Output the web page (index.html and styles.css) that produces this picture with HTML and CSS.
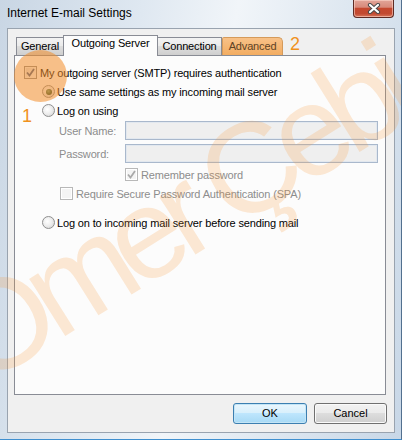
FILE: index.html
```html
<!DOCTYPE html>
<html lang="en">
<head>
<meta charset="utf-8">
<title>Internet E-mail Settings</title>
<link rel="stylesheet" href="styles.css">
</head>
<body>
<div class="window">
  <div class="titlebar">
    <span class="title">Internet E-mail Settings</span>
    <div class="close">
      <svg width="14" height="11" viewBox="0 0 14 11">
        <path d="M3 2 L11 9 M11 2 L3 9" stroke="#4a4a4a" stroke-width="4.2" stroke-linecap="round" fill="none"/>
        <path d="M3 2 L11 9 M11 2 L3 9" stroke="#ffffff" stroke-width="2.2" stroke-linecap="round" fill="none"/>
      </svg>
    </div>
  </div>
  <div class="client">
    <div class="tabs">
      <div class="tab t-general">General</div>
      <div class="tab selected t-out">Outgoing Server</div>
      <div class="tab t-conn">Connection</div>
      <div class="tab t-adv">Advanced</div>
    </div>
    <div class="panel">
      <div class="row r1">
        <span class="cb">
          <svg width="9" height="9" viewBox="0 0 9 9"><path d="M1 4.5 L3.5 7.5 L8 1" stroke="#4b5f87" stroke-width="1.8" fill="none"/></svg>
        </span>
        <span class="lab">My outgoing server (SMTP) requires authentication</span>
      </div>
      <div class="row ind r2">
        <span class="rb on"><span class="dot"></span></span>
        <span class="lab">Use same settings as my incoming mail server</span>
      </div>
      <div class="row ind r3">
        <span class="rb"></span>
        <span class="lab">Log on using</span>
      </div>
      <div class="row field r4">
        <span class="flbl">User Name:</span>
        <span class="input"></span>
      </div>
      <div class="row field r5">
        <span class="flbl">Password:</span>
        <span class="input"></span>
      </div>
      <div class="row r6">
        <span class="cb dis">
          <svg width="9" height="9" viewBox="0 0 9 9"><path d="M1 4.5 L3.5 7.5 L8 1" stroke="#a9a9a9" stroke-width="1.8" fill="none"/></svg>
        </span>
        <span class="lab dis-t">Remember password</span>
      </div>
      <div class="row r7">
        <span class="cb dis"></span>
        <span class="lab dis-t">Require Secure Password Authentication (SPA)</span>
      </div>
      <div class="row ind r8">
        <span class="rb"></span>
        <span class="lab">Log on to incoming mail server before sending mail</span>
      </div>
    </div>
    <div class="buttons">
      <button class="btn btn-ok">OK</button>
      <button class="btn btn-cancel">Cancel</button>
    </div>
  </div>
  <div class="watermark">Ömer Çebi</div>
  <div class="hl-circle"></div>
  <div class="num n1">1</div>
  <div class="num n2">2</div>
</div>
</body>
</html>
```
FILE: styles.css
```css
* { box-sizing: border-box; }
html, body { margin: 0; padding: 0; }
body {
  width: 402px;
  height: 440px;
  overflow: hidden;
  font-family: "Liberation Sans", Arial, sans-serif;
  font-size: 11px;
  letter-spacing: -0.15px;
  color: #000;
}
.window {
  position: relative;
  width: 402px;
  height: 440px;
  overflow: hidden;
  background: linear-gradient(100deg, #c9d6e4 0%, #dfe8f1 30%, #f1f5f9 50%, #dfe8f1 72%, #c8d7e7 100%);
  border-right: 1px solid #52708f;
  border-bottom: 1px solid #3f8fcf;
}
.titlebar {
  height: 28px;
  display: flex;
  justify-content: space-between;
  align-items: flex-start;
}
.title {
  margin: 6px 0 0 7px;
  font-size: 12px;
  line-height: 14px;
  letter-spacing: 0;
  color: #000;
}
.close {
  width: 41px;
  height: 18px;
  margin-right: 7px;
  border: 1px solid #5e2b24;
  border-top: none;
  border-radius: 0 0 4px 4px;
  background: linear-gradient(#e2a599 0%, #d88a7b 42%, #c5482f 50%, #c24a31 80%, #d8765c 100%);
  box-shadow: inset 0 0 0 1px rgba(255, 220, 210, 0.55);
  display: flex;
  align-items: center;
  justify-content: center;
}
.close svg { display: block; }
.client {
  height: 405px;
  margin: 0 6px 0 7px;
  border: 1px solid #99a3af;
  background: #f0f0f0;
  padding: 6px 0 0 6px;
}
.tabs {
  display: flex;
  align-items: flex-end;
  height: 20px;
  margin-left: 2px;
}
.tab {
  height: 18px;
  line-height: 16px;
  text-align: center;
  border: 1px solid #898c95;
  border-bottom: none;
  background: linear-gradient(#f3f3f3 0%, #ebebeb 45%, #dddddd 50%, #cfcfcf 100%);
  white-space: nowrap;
}
.t-general { width: 47px; border-right: none; }
.t-out { width: 95px; }
.t-conn { width: 64px; border-left: none; }
.t-adv {
  width: 61px;
  border-left: 1px solid #898c95;
  background: linear-gradient(#f8c187, #f3ad62);
  border-color: #d59a5a;
  border-radius: 2px 5px 0 0;
  color: #5e4326;
}
.tab.selected {
  position: relative;
  z-index: 1;
  height: 21px;
  margin-bottom: -1px;
  line-height: 15px;
  background: #fcfcfc;
}
.panel {
  width: 372px;
  height: 340px;
  border: 1px solid #898c95;
  background: #fcfcfc;
  padding-top: 7px;
}
.row {
  display: flex;
  align-items: center;
  height: 19px;
  white-space: nowrap;
}
.r1 { padding-left: 9px; }
.ind { padding-left: 27px; }
.field { padding-left: 44px; }
.r4 { margin-top: 1px; }
.r5 { margin-top: 4px; }
.r6 { margin-top: 2px; padding-left: 110px; }
.r7 { padding-left: 45px; }
.r8 { margin-top: 10px; }
.lab { margin-left: 3px; }
.ind .lab { margin-left: 2px; }
.dis-t, .flbl { color: #8d8d8d; }
.flbl { width: 66px; }
.cb {
  width: 13px;
  height: 13px;
  flex: none;
  border: 1px solid #8f8f8f;
  background: linear-gradient(135deg, #dcdcdc, #fbfbfb);
  box-shadow: inset 0 0 0 1px #f4f4f4;
  display: flex;
  align-items: center;
  justify-content: center;
}
.cb svg { display: block; }
.cb.dis {
  border-color: #b8b8b8;
  background: #f4f4f4;
  box-shadow: inset 0 0 0 1px #ffffff;
}
.rb {
  width: 13px;
  height: 13px;
  flex: none;
  border: 1px solid #8f8f8f;
  border-radius: 50%;
  background: radial-gradient(circle at 40% 40%, #ffffff 0%, #ececec 50%, #cfcfcf 100%);
  display: flex;
  align-items: center;
  justify-content: center;
}
.rb .dot {
  width: 6px;
  height: 6px;
  border-radius: 50%;
  background: radial-gradient(circle at 40% 35%, #7ea37a 0%, #3b5f3b 55%, #1f3a22 100%);
}
.input {
  width: 253px;
  height: 19px;
  border: 1px solid #a9b8cc;
  background: #efefef;
  box-shadow: inset 0 0 0 1px #e2e8ef;
}
.buttons {
  width: 373px;
  margin-top: 8px;
  display: flex;
  justify-content: flex-end;
  gap: 7px;
}
.btn {
  height: 21px;
  padding: 0;
  font-family: "Liberation Sans", Arial, sans-serif;
  font-size: 11px;
  color: #000;
  border-radius: 3px;
  text-align: center;
  line-height: 17px;
}
.btn-ok {
  width: 74px;
  border: 1px solid #3c7fb1;
  background: linear-gradient(#eaf6fd 0%, #d9f0fc 45%, #bee6fd 50%, #a7d9f5 100%);
  box-shadow: inset 0 0 0 1px #c4e5f6;
}
.btn-cancel {
  width: 73px;
  border: 1px solid #707070;
  background: linear-gradient(#f2f2f2 0%, #ebebeb 45%, #dddddd 50%, #cfcfcf 100%);
  box-shadow: inset 0 0 0 1px #fafafa;
}
.watermark {
  position: absolute;
  left: -6px;
  top: 276px;
  font-family: "Liberation Sans", Arial, sans-serif;
  font-size: 128px;
  line-height: 1;
  letter-spacing: -12px;
  color: rgba(248, 150, 50, 0.2);
  transform: rotate(-32deg);
  transform-origin: left bottom;
  white-space: nowrap;
  pointer-events: none;
}
.hl-circle {
  position: absolute;
  left: 14px;
  top: 50px;
  width: 53px;
  height: 52px;
  border-radius: 50%;
  background: rgba(242, 140, 40, 0.55);
  pointer-events: none;
}
.num {
  position: absolute;
  font-family: "Liberation Sans", Arial, sans-serif;
  font-size: 18px;
  line-height: 18px;
  letter-spacing: 0;
  color: #f0921e;
}
.n1 { left: 22px; top: 107px; }
.n2 { left: 290px; top: 35px; }
```
